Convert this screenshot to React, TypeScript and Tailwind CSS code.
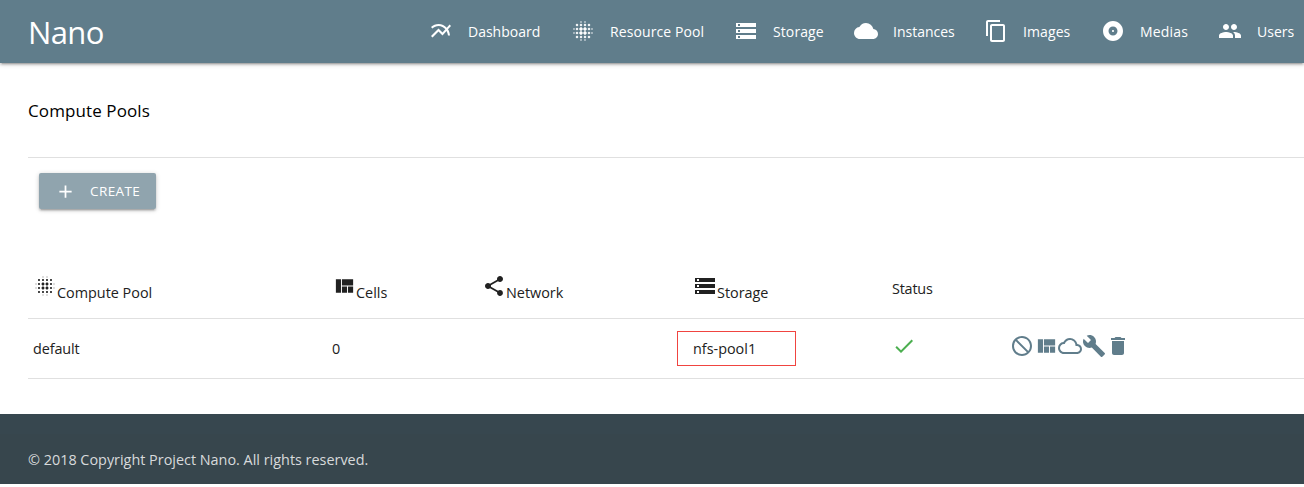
import React from "react";
import {
  MdMultilineChart, MdBlurOn, MdStorage, MdCloud, MdContentCopy, MdAlbum, MdPeople,
  MdAdd, MdViewQuilt, MdShare, MdCheck, MdBlock, MdCloudQueue, MdBuild, MdDelete,
} from "react-icons/md";
import type { IconType } from "react-icons";

const nav: { icon: IconType; label: string; item: string; iconClass?: string }[] = [
  { icon: MdMultilineChart, label: "Dashboard", item: "w-[142px]" },
  { icon: MdBlurOn, label: "Resource Pool", item: "w-[163px] tracking-[0.1px]", iconClass: "stroke-[0.5] [&>path:first-child]:stroke-none" },
  { icon: MdStorage, label: "Storage", item: "w-[120px] tracking-[0.1px]" },
  { icon: MdCloud, label: "Instances", item: "w-[130px]" },
  { icon: MdContentCopy, label: "Images", item: "w-[117px] tracking-[0.1px]" },
  { icon: MdAlbum, label: "Medias", item: "w-[117px] tracking-[0.2px]" },
  { icon: MdPeople, label: "Users", item: "w-[86px]" },
];

const columns: { icon?: IconType; label: string; width: string; iconClass?: string }[] = [
  { icon: MdBlurOn, label: "Compute Pool", width: "w-[299px]" },
  { icon: MdViewQuilt, label: "Cells", width: "w-[150px]", iconClass: "pl-px" },
  { icon: MdShare, label: "Network", width: "w-[210px]" },
  { icon: MdStorage, label: "Storage", width: "w-[200px] pl-px" },
  { label: "Status", width: "w-[120px] tracking-[-0.2px]" },
];

const actions: { icon: IconType; iconClass?: string }[] = [
  { icon: MdBlock, iconClass: "-scale-x-100" },
  { icon: MdViewQuilt, iconClass: "pl-px" },
  { icon: MdCloudQueue },
  { icon: MdBuild },
  { icon: MdDelete },
];

export default function App() {
  return (
    <div className="h-[487px] w-[1304px] overflow-hidden bg-white font-['Open_Sans','Noto_Sans',sans-serif] text-[14.4px] text-[#212121]">
      <header className="relative flex h-[63px] items-center bg-[#607d8b] pl-7 text-white shadow-[0_2px_2px_0_rgba(0,0,0,0.14),0_3px_1px_-2px_rgba(0,0,0,0.12),0_1px_5px_0_rgba(0,0,0,0.2)]">
        <div className="w-[401px] pt-0.5 text-[31px] tracking-[-0.6px]">Nano</div>
        <nav className="flex">
          {nav.map(({ icon: Icon, label, item, iconClass = "" }) => (
            <div key={label} className={`flex shrink-0 items-center gap-[15px] whitespace-nowrap text-sm ${item}`}>
              <Icon className={`-mt-0.5 size-6 shrink-0 ${iconClass}`} />
              <span>{label}</span>
            </div>
          ))}
        </nav>
      </header>
      <main className="ml-7 h-[351px]">
        <div className="flex h-[95px] items-center border-b border-[#e0e0e0] pt-0.5 text-[17px] tracking-[0.1px] text-black">Compute Pools</div>
        <button className="ml-[11px] mt-[15px] flex h-9 w-[117px] items-center rounded-[2px] bg-[#90a4ae] pl-4 text-[13.5px] text-white shadow-[0_2px_2px_0_rgba(0,0,0,0.14),0_3px_1px_-2px_rgba(0,0,0,0.12),0_1px_5px_0_rgba(0,0,0,0.2)]">
          <MdAdd className="size-[21px]" />
          <span className="ml-3.5 pt-px tracking-[0.4px]">CREATE</span>
        </button>
        <div className="mt-[50px] flex h-[60px] items-center border-b border-[#e0e0e0] pl-[5px]">
          {columns.map(({ icon: Icon, label, width, iconClass = "" }) => (
            <div key={label} className={`flex items-center ${width}`}>
              {Icon && <Icon className={`-mt-1 size-6 ${iconClass}`} />}
              <span className={Icon ? "pt-2" : ""}>{label}</span>
            </div>
          ))}
        </div>
        <div className="flex h-[60px] items-center border-b border-[#e0e0e0] pl-[5px]">
          <div className="w-[299px] tracking-[-0.1px]">default</div>
          <div className="w-[345px]">0</div>
          <div className="flex h-[35px] w-[119px] items-center border border-[#f04440] pl-[15px]">nfs-pool1</div>
          <div className="ml-[96px] w-[118px] pb-[5px] text-[#4caf50]"><MdCheck className="size-6" /></div>
          <div className="flex pb-[5px] text-[#607d8b]">
            {actions.map(({ icon: Icon, iconClass = "" }, i) => <Icon key={i} className={`size-6 ${iconClass}`} />)}
          </div>
        </div>
      </main>
      <footer className="h-[70px] bg-[#37474f] pt-5">
        <div className="flex h-[50px] items-center bg-[#37464d] pl-7 pt-0.5 text-[#d7dadc]">© 2018 Copyright Project Nano. All rights reserved.</div>
      </footer>
    </div>
  );
}
